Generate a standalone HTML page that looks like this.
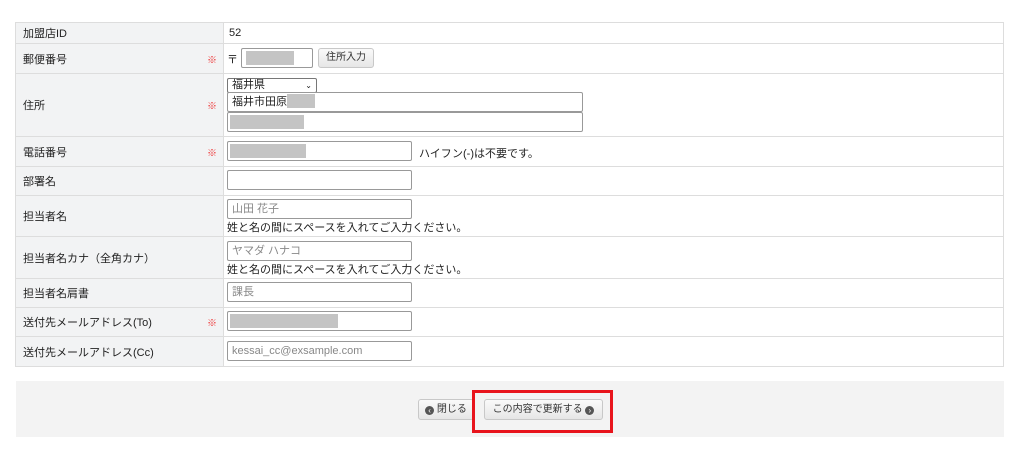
<!DOCTYPE html>
<html><head><style>
body{margin:0;background:#fff;font-family:"Liberation Sans","Noto Sans CJK JP",sans-serif;font-size:11px;color:#222;}
.t{position:absolute;left:15px;top:22px;width:989px;border-collapse:collapse;table-layout:fixed;font-size:11px;}
.t td{border:1px solid #ddd;padding:0;}
.l{background:#f2f3f4;width:200px;position:relative;padding-left:7px!important;}
.v{position:relative;}
.req{position:absolute;right:6px;color:#e33;font-size:10px;top:50%;transform:translateY(-50%);}
.in{position:absolute;height:20px;border:1px solid #999;border-radius:2px;box-sizing:border-box;background:#fff;color:#888;font-size:11px;line-height:18px;padding-left:4px;}
.g{position:absolute;background:#c4c4c4;height:14px;top:2px;}
.a{position:absolute;font-size:11px;}
.btn{position:absolute;height:21px;border:1px solid #c8c8c8;border-radius:3px;background:linear-gradient(#fafafa,#e6e6e6);box-sizing:border-box;font-size:10px;line-height:19px;text-align:center;color:#333;}
.ic{display:inline-block;width:9px;height:9px;border-radius:50%;background:#555;color:#fff;font-size:8px;line-height:9px;vertical-align:-1px;}
</style></head><body>
<table class="t">
<tr style="height:21px"><td class="l">加盟店ID</td><td class="v" style="padding-left:5px">52</td></tr>
<tr style="height:30px"><td class="l">郵便番号<span class="req">※</span></td><td class="v"></td></tr>
<tr style="height:63px"><td class="l">住所<span class="req">※</span></td><td class="v"></td></tr>
<tr style="height:30px"><td class="l">電話番号<span class="req">※</span></td><td class="v"></td></tr>
<tr style="height:29px"><td class="l">部署名</td><td class="v"></td></tr>
<tr style="height:41px"><td class="l">担当者名</td><td class="v"></td></tr>
<tr style="height:42px"><td class="l">担当者名カナ（全角カナ）</td><td class="v"></td></tr>
<tr style="height:29px"><td class="l">担当者名肩書</td><td class="v"></td></tr>
<tr style="height:29px"><td class="l">送付先メールアドレス(To)<span class="req">※</span></td><td class="v"></td></tr>
<tr style="height:30px"><td class="l">送付先メールアドレス(Cc)</td><td class="v"></td></tr>
</table>
<div class="a" style="left:227px;top:51px">〒</div>
<div class="in" style="left:241px;top:48px;width:72px"><div class="g" style="left:4px;width:48px"></div></div>
<div class="btn" style="left:318px;top:48px;width:56px;height:20px;line-height:18px">住所入力</div>
<div class="in" style="left:227px;top:78px;width:90px;height:15px;line-height:13px;color:#222;border-color:#777">福井県<span style="position:absolute;right:4px;font-size:8px">⌄</span></div>
<div class="in" style="left:227px;top:92px;width:356px;color:#222">福井市田原<span style="display:inline-block;background:#c4c4c4;width:28px;height:14px;vertical-align:-3px"></span></div>
<div class="in" style="left:227px;top:112px;width:356px"><div class="g" style="left:2px;width:74px"></div></div>
<div class="in" style="left:227px;top:141px;width:185px"><div class="g" style="left:2px;width:76px"></div></div>
<div class="a" style="left:419px;top:145px">ハイフン(-)は不要です。</div>
<div class="in" style="left:227px;top:170px;width:185px"></div>
<div class="in" style="left:227px;top:199px;width:185px">山田 花子</div>
<div class="a" style="left:227px;top:219px">姓と名の間にスペースを入れてご入力ください。</div>
<div class="in" style="left:227px;top:241px;width:185px">ヤマダ ハナコ</div>
<div class="a" style="left:227px;top:261px">姓と名の間にスペースを入れてご入力ください。</div>
<div class="in" style="left:227px;top:282px;width:185px">課長</div>
<div class="in" style="left:227px;top:311px;width:185px"><div class="g" style="left:2px;width:108px"></div></div>
<div class="in" style="left:227px;top:341px;width:185px">kessai_cc@exsample.com</div>
<div style="position:absolute;left:16px;top:381px;width:988px;height:56px;background:#f3f3f3"></div>
<div class="btn" style="left:418px;top:399px;width:56px"><span class="ic">‹</span> 閉じる</div>
<div class="btn" style="left:484px;top:399px;width:119px">この内容で更新する <span class="ic">›</span></div>
<div style="position:absolute;left:472px;top:390px;width:141px;height:43px;border:3px solid #e8141c;box-sizing:border-box"></div>
</body></html>
